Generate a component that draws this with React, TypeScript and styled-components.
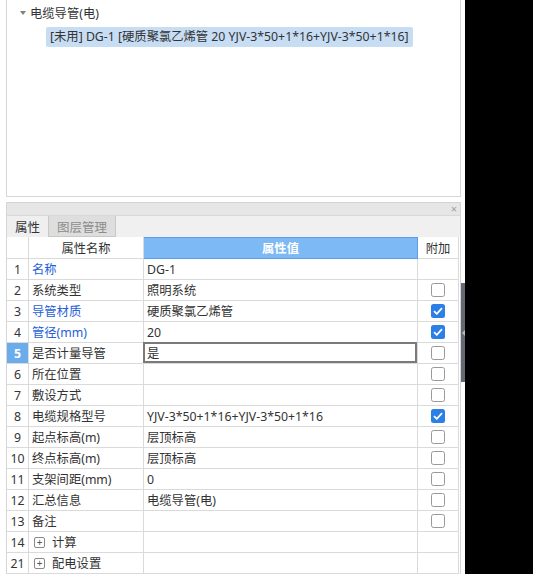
import { styled, createGlobalStyle } from "styled-components";

const GlobalStyle = createGlobalStyle`
  html, body {
    margin: 0;
    padding: 0;
    background: #000;
  }
  body {
    font-family: "Noto Sans", "Noto Sans CJK SC", sans-serif;
    font-size: 12.3px;
    color: #333;
  }
`;

type PropRow = {
  no: string;
  name: string;
  value: string;
  blue?: boolean;
  check?: "on" | "off";
  group?: boolean;
  selected?: boolean;
};

const ROWS: PropRow[] = [
  { no: "1", name: "名称", value: "DG-1", blue: true },
  { no: "2", name: "系统类型", value: "照明系统", check: "off" },
  { no: "3", name: "导管材质", value: "硬质聚氯乙烯管", blue: true, check: "on" },
  { no: "4", name: "管径(mm)", value: "20", blue: true, check: "on" },
  { no: "5", name: "是否计量导管", value: "是", check: "off", selected: true },
  { no: "6", name: "所在位置", value: "", check: "off" },
  { no: "7", name: "敷设方式", value: "", check: "off" },
  { no: "8", name: "电缆规格型号", value: "YJV-3*50+1*16+YJV-3*50+1*16", check: "on" },
  { no: "9", name: "起点标高(m)", value: "层顶标高", check: "off" },
  { no: "10", name: "终点标高(m)", value: "层顶标高", check: "off" },
  { no: "11", name: "支架间距(mm)", value: "0", check: "off" },
  { no: "12", name: "汇总信息", value: "电缆导管(电)", check: "off" },
  { no: "13", name: "备注", value: "", check: "off" },
  { no: "14", name: "计算", value: "", group: true },
  { no: "21", name: "配电设置", value: "", group: true },
];

const Screen = styled.div`
  display: flex;
  width: 465px;
  height: 574px;
  background: #fff;
  overflow: hidden;
`;

const Column = styled.div`
  display: flex;
  flex-direction: column;
  margin-left: 6px;
  width: 455px;
`;

const TreePanel = styled.div`
  height: 198px;
  box-sizing: border-box;
  border: 1px solid #d6d6d6;
  border-top: none;
  padding: 4px 0 0 13px;
`;

const TreeNode = styled.div`
  display: flex;
  align-items: center;
  height: 18px;
  gap: 3px;
  color: #333;
`;

const Caret = styled.span`
  width: 0;
  height: 0;
  border-left: 3.5px solid transparent;
  border-right: 3.5px solid transparent;
  border-top: 4px solid #808080;
  margin-right: 1px;
`;

const LeafRow = styled.div`
  display: flex;
  padding-left: 26px;
  margin-top: 5px;
`;

const Leaf = styled.span`
  background: #c7ddf3;
  border-radius: 2px;
  padding: 0 4px;
  height: 20px;
  line-height: 20px;
  color: #333;
  white-space: nowrap;
`;

const PropPanel = styled.div`
  margin-top: 5px;
  display: flex;
  flex-direction: column;
  border-left: 1px solid #d6d6d6;
  border-right: 1px solid #d6d6d6;
  flex: 1;
`;

const TitleBar = styled.div`
  height: 12px;
  background: #e6e6e6;
  border-top: 1px solid #d2d2d2;
  display: flex;
  justify-content: flex-end;
  align-items: center;
  padding-right: 3px;
`;

const CloseMark = styled.span`
  font-size: 11px;
  line-height: 10px;
  color: #a0a0a0;
`;

const TabStrip = styled.div`
  height: 21px;
  background: #f0f0f0;
  border-top: 1px solid #d8d8d8;
  display: flex;
`;

const Tab = styled.div<{ $active?: boolean }>`
  height: 21px;
  box-sizing: border-box;
  padding: 0 8px;
  display: flex;
  align-items: center;
  background: ${(p) => (p.$active ? "#efefef" : "#dedede")};
  color: ${(p) => (p.$active ? "#333" : "#8c8c8c")};
  border-right: 1px solid #c8c8c8;
  border-bottom: ${(p) => (p.$active ? "none" : "1px solid #c8c8c8")};
  font-size: 12.5px;
`;

const Grid = styled.div`
  display: flex;
  flex-direction: column;
  width: 452px;
`;

const Row = styled.div<{ $head?: boolean }>`
  display: grid;
  grid-template-columns: 22px 115px 274px 41px;
  height: ${(p) => (p.$head ? "22px" : "21px")};
`;

const Cell = styled.div<{
  $center?: boolean;
  $blue?: boolean;
  $fill?: "head" | "pick";
  $edit?: boolean;
}>`
  box-sizing: border-box;
  border-right: 1px solid #dadada;
  border-bottom: 1px solid #dadada;
  display: flex;
  align-items: center;
  justify-content: ${(p) => (p.$center ? "center" : "flex-start")};
  padding-left: ${(p) => (p.$center ? "0" : "3px")};
  white-space: nowrap;
  overflow: hidden;
  color: ${(p) => (p.$fill ? "#fff" : p.$blue ? "#2460d8" : "#333")};
  background: ${(p) => (p.$fill === "head" ? "#7db9f4" : p.$fill === "pick" ? "#6aacec" : "#fff")};
  font-weight: ${(p) => (p.$fill ? 700 : 400)};
  ${(p) => (p.$fill === "head" ? "border: 1px solid #5a9ee8; border-left: none;" : "")}
  ${(p) => (p.$edit ? "box-shadow: inset 0 0 0 2px #7a7a7a; margin: -1px 0 0 -1px; padding-left: 4px;" : "")}
`;

const Box = styled.span<{ $on?: boolean }>`
  width: 14px;
  height: 14px;
  box-sizing: border-box;
  border-radius: 2.5px;
  border: ${(p) => (p.$on ? "none" : "1.5px solid #999")};
  background: ${(p) => (p.$on ? "#2b7fe6" : "#fff")};
  display: flex;
  align-items: center;
  justify-content: center;
`;

const Expander = styled.span`
  width: 11px;
  height: 11px;
  box-sizing: border-box;
  border: 1px solid #888;
  border-radius: 2px;
  display: inline-flex;
  align-items: center;
  justify-content: center;
  font-size: 10px;
  line-height: 1;
  color: #555;
  margin: 0 7px 0 2px;
`;

const SideStrip = styled.div`
  width: 4px;
  display: flex;
  flex-direction: column;
  padding-top: 283px;
`;

const Handle = styled.div`
  height: 99px;
  background: #646a73;
  display: flex;
  align-items: center;
`;

const HandleArrow = styled.span`
  width: 0;
  height: 0;
  border-top: 3px solid transparent;
  border-bottom: 3px solid transparent;
  border-right: 3px solid #b8bcc2;
  margin-left: 1px;
`;

const Check = () => (
  <svg width="10" height="8" viewBox="0 0 10 8">
    <path d="M1 4.2 L3.8 6.8 L9 1.2" fill="none" stroke="#fff" strokeWidth="1.8" />
  </svg>
);

export default function App() {
  return (
    <>
      <GlobalStyle />
      <Screen>
        <Column>
          <TreePanel>
            <TreeNode>
              <Caret />
              <span>电缆导管(电)</span>
            </TreeNode>
            <LeafRow>
              <Leaf>[未用] DG-1 [硬质聚氯乙烯管 20 YJV-3*50+1*16+YJV-3*50+1*16]</Leaf>
            </LeafRow>
          </TreePanel>
          <PropPanel>
            <TitleBar>
              <CloseMark>×</CloseMark>
            </TitleBar>
            <TabStrip>
              <Tab $active>属性</Tab>
              <Tab>图层管理</Tab>
            </TabStrip>
            <Grid>
              <Row $head>
                <Cell $center />
                <Cell $center>属性名称</Cell>
                <Cell $center $fill="head">属性值</Cell>
                <Cell $center>附加</Cell>
              </Row>
              {ROWS.map((r) => (
                <Row key={r.no}>
                  <Cell $center $fill={r.selected ? "pick" : undefined}>
                    {r.no}
                  </Cell>
                  <Cell $blue={r.blue}>
                    {r.group && <Expander>+</Expander>}
                    {r.name}
                  </Cell>
                  <Cell $edit={r.selected}>{r.value}</Cell>
                  <Cell $center>{r.check && <Box $on={r.check === "on"}>{r.check === "on" && <Check />}</Box>}</Cell>
                </Row>
              ))}
            </Grid>
          </PropPanel>
        </Column>
        <SideStrip>
          <Handle>
            <HandleArrow />
          </Handle>
        </SideStrip>
      </Screen>
    </>
  );
}
